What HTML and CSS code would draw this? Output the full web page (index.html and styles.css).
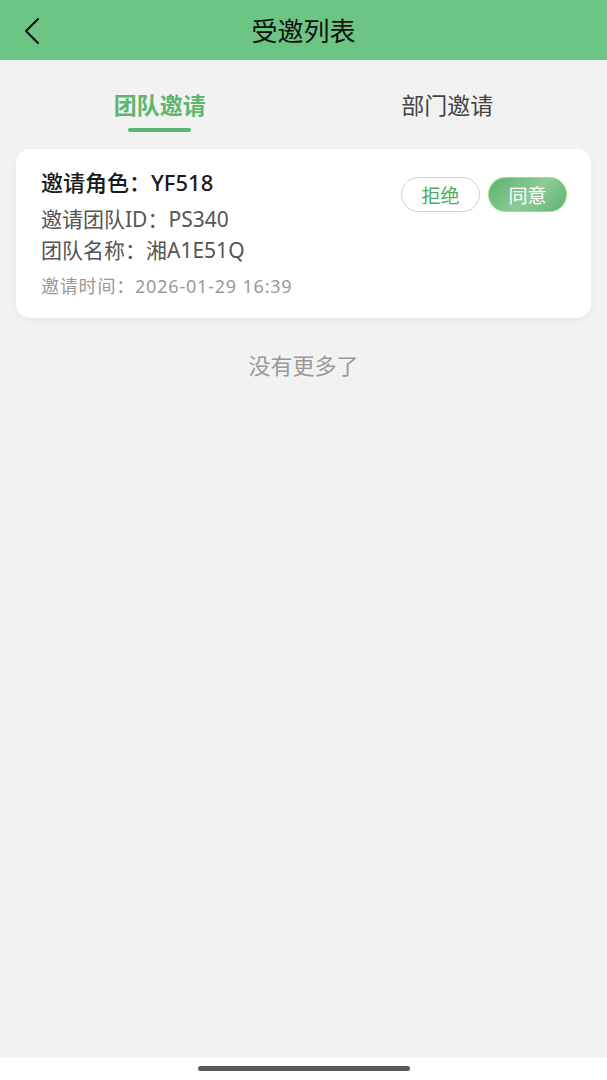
FILE: index.html
```html
<!DOCTYPE html>
<html lang="zh-CN">
<head>
    <meta charset="UTF-8">
    <meta name="viewport" content="width=device-width, initial-scale=1.0">
    <title>受邀列表</title>
    <link rel="stylesheet" href="styles.css">
</head>
<body>
    <div class="page">
        <div class="navbar">
            <button class="back">
                <svg width="22" height="28" viewBox="0 0 22 28"><path d="M17 2 L5 14 L17 26" fill="none" stroke="#111" stroke-width="2.2" stroke-linecap="round" stroke-linejoin="round"/></svg>
            </button>
            <div class="nav-title">受邀列表</div>
        </div>

        <div class="tabs">
            <div class="tab active">团队邀请</div>
            <div class="tab">部门邀请</div>
        </div>

        <div class="list">
            <div class="card">
                <div class="info">
                    <div class="role">邀请角色：YF518</div>
                    <div class="line first">邀请团队ID：PS340</div>
                    <div class="line">团队名称：湘A1E51Q</div>
                    <div class="time">邀请时间：2026-01-29 16:39</div>
                </div>
                <div class="actions">
                    <button class="btn refuse">拒绝</button>
                    <button class="btn agree">同意</button>
                </div>
            </div>
            <div class="no-more">没有更多了</div>
        </div>

        <div class="home-bar">
            <div class="indicator"></div>
        </div>
    </div>
</body>
</html>
```

FILE: styles.css
```css
body {
    margin: 0;
    padding: 0;
    font-family: "Noto Sans", "Noto Sans CJK SC", sans-serif;
    background-color: #F2F2F2;
}

.page {
    display: flex;
    flex-direction: column;
    height: 1080px;
}

.navbar {
    height: 60px;
    background-color: #6DC584;
    display: flex;
    align-items: center;
    justify-content: center;
    position: relative;
}

.back {
    position: absolute;
    left: 21px;
    top: 17px;
    background: none;
    border: none;
    padding: 0;
}

.nav-title {
    font-size: 26px;
    color: #111;
}

.tabs {
    display: flex;
    height: 75px;
    padding: 0 16px;
}

.tab {
    flex: 1;
    text-align: center;
    font-size: 23px;
    line-height: 32px;
    color: #444;
    padding-top: 29px;
    position: relative;
}

.tab.active {
    color: #5DB66F;
    font-weight: bold;
}

.tab.active::after {
    content: "";
    position: absolute;
    left: 50%;
    top: 68px;
    width: 63px;
    height: 4px;
    margin-left: -32px;
    border-radius: 2px;
    background-color: #5DB66F;
}

.list {
    flex: 1;
    padding: 14px 16px 0;
}

.card {
    background-color: #fff;
    border-radius: 14px;
    box-shadow: 0 2px 6px rgba(0, 0, 0, 0.05);
    padding: 18px 24px 17px 25px;
    display: flex;
    justify-content: space-between;
    align-items: flex-start;
}

.role {
    font-size: 22px;
    color: #1a1a1a;
    font-weight: 500;
    line-height: 30px;
}

.line {
    font-size: 21px;
    color: #555;
    line-height: 31px;
}

.line.first {
    margin-top: 7px;
}

.time {
    font-size: 18px;
    color: #999;
    line-height: 30px;
    margin-top: 5px;
    letter-spacing: 0.8px;
}

.actions {
    display: flex;
    gap: 8px;
    margin-top: 10px;
}

.btn {
    width: 79px;
    height: 35px;
    border-radius: 18px;
    font-family: inherit;
    font-size: 19px;
    padding: 0;
}

.refuse {
    background-color: #fff;
    border: 1px solid #C9D6CC;
    color: #4FA962;
}

.agree {
    background: linear-gradient(135deg, #5EB26D, #8DCB98 55%, #5DB36C);
    border: 1px solid #9CDB7E;
    color: #fff;
}

.no-more {
    text-align: center;
    font-size: 22px;
    line-height: 30px;
    color: #999;
    margin-top: 32px;
}

.home-bar {
    height: 22px;
    background-color: #fff;
    display: flex;
    justify-content: center;
    padding-top: 8px;
    box-sizing: border-box;
}

.indicator {
    width: 212px;
    height: 5px;
    border-radius: 3px;
    background-color: #5A5A5A;
}
```
